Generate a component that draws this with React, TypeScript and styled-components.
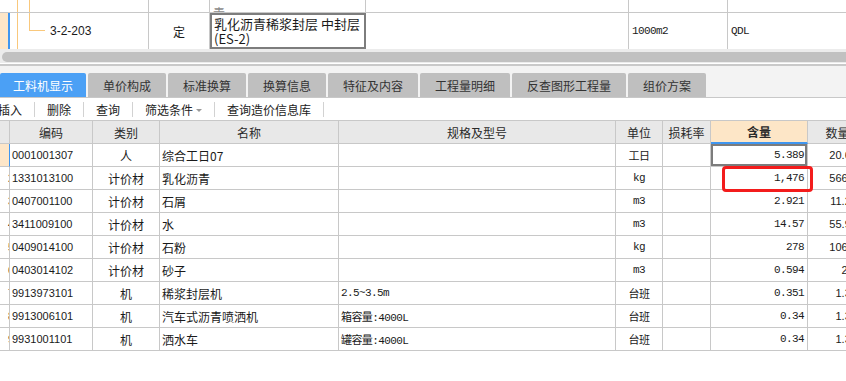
import React from "react";
import styled, { createGlobalStyle, css } from "styled-components";

const LINE = "#c8c8c8";
const ORANGE_BG = "#fde6c8";
const TREE = "#f9c87c";
const BLUE = "#3f96f0";

const GlobalStyle = createGlobalStyle`
  html, body {
    margin: 0;
    padding: 0;
    background: #fff;
    overflow: hidden;
  }
  body {
    font-family: "Noto Sans CJK SC", "Liberation Sans", sans-serif;
    font-size: 12px;
    color: #1a1a1a;
  }
`;

const monoText = css`
  font-family: "Liberation Mono", "Noto Sans CJK SC", monospace;
  font-size: 11px;
  letter-spacing: -0.6px;
`;

const Page = styled.div`
  width: 846px;
  height: 381px;
  overflow: hidden;
  display: flex;
  flex-direction: column;
`;

/* ---------- upper grid (定额行) ---------- */

const TopGrid = styled.div`
  display: grid;
  grid-template-columns: 10px 139px 61px 156px 263px 99px 120px;
  grid-template-rows: 13px 36px;
  width: 848px;
`;

const TopCell = styled.div<{ $row: 1 | 2; $strip?: boolean; $center?: boolean; $editing?: boolean }>`
  display: flex;
  align-items: ${(p) => (p.$row === 1 ? "flex-end" : "center")};
  justify-content: ${(p) => (p.$center ? "center" : "flex-start")};
  overflow: hidden;
  box-sizing: border-box;
  border-right: 1px solid ${LINE};
  border-bottom: ${(p) => (p.$row === 1 ? `1px solid ${LINE}` : "none")};
  ${(p) =>
    p.$strip &&
    css`
      border-right: ${p.$row === 2 ? `2px solid ${BLUE}` : "none"};
      background: ${p.$row === 2 ? ORANGE_BG : "#fff"};
    `}
  ${(p) =>
    p.$editing &&
    css`
      border: 2px solid #7d7d7d;
      align-items: flex-start;
      padding: 1px 2px;
    `}
`;

const TreeCell = styled(TopCell)`
  align-items: stretch;
  padding-left: 7px;
`;

const Guide = styled.span`
  width: 11px;
  flex: none;
  border-left: 1px solid ${TREE};
`;

const Elbow = styled.span`
  width: 15px;
  height: 17px;
  flex: none;
  border-left: 1px solid ${TREE};
  border-bottom: 1px solid ${TREE};
`;

const TreeCode = styled.span`
  align-self: center;
  margin-left: 5px;
  font-family: "Liberation Sans", sans-serif;
  font-size: 12px;
`;

const CutText = styled.span`
  padding-left: 3px;
  margin-bottom: -8px;
  line-height: 14px;
  color: #8a8a8a;
`;

const NameText = styled.div`
  font-size: 13px;
  line-height: 15px;
`;

const MonoText = styled.span`
  ${monoText};
  padding-left: 3px;
`;

/* ---------- scrollbar ---------- */

const Track = styled.div`
  height: 11px;
  padding: 3px 0 1px 2px;
  background: linear-gradient(#ececec, #ececec) top / 100% 14px no-repeat, #fff;
  border-bottom: 2px solid #c9c9c9;
`;

const Thumb = styled.div`
  height: 10px;
  border-radius: 5px 0 0 5px;
  background: #c1c1c1;
`;

/* ---------- tabs ---------- */

const TabBar = styled.div`
  display: flex;
  gap: 2px;
  padding-top: 7px;
  background: #f3f3f3;
  border-bottom: 1px solid ${LINE};
`;

const Tab = styled.div<{ $active?: boolean }>`
  height: 24px;
  padding: 0 15px;
  display: flex;
  align-items: center;
  border-radius: 2px 2px 0 0;
  font-size: 12px;
  color: ${(p) => (p.$active ? "#fff" : "#333")};
  background: ${(p) => (p.$active ? "#4ba0f5" : "#bfbfbf")};
  ${(p) =>
    p.$active &&
    css`
      padding: 0 13px;
    `}
`;

/* ---------- toolbar ---------- */

const Toolbar = styled.div`
  height: 22px;
  display: flex;
  align-items: center;
  margin-left: -14px;
  border-bottom: 1px solid ${LINE};
`;

const ToolItem = styled.span`
  display: flex;
  align-items: center;
  padding: 0 12px;
  font-size: 12px;
  color: #222;
`;

const ToolSep = styled.span`
  width: 1px;
  height: 15px;
  background: #d2d2d2;
`;

const Caret = styled.span`
  margin-left: 3px;
  margin-top: 2px;
  border-left: 3px solid transparent;
  border-right: 3px solid transparent;
  border-top: 3px solid #9a9a9a;
`;

/* ---------- main grid ---------- */

const Grid = styled.div`
  display: grid;
  grid-template-columns: 10px 83px 67px 179px 277px 47px 48px 97px 60px;
  grid-auto-rows: 23px;
  width: 868px;
`;

type Align = "left" | "center" | "right";

const Cell = styled.div<{ $align?: Align; $mono?: boolean; $code?: boolean }>`
  position: relative;
  box-sizing: border-box;
  display: flex;
  align-items: center;
  justify-content: ${(p) =>
    p.$align === "center" ? "center" : p.$align === "right" ? "flex-end" : "flex-start"};
  padding: ${(p) => (p.$align === "right" ? "0 3px 0 0" : p.$align === "center" ? "0" : "0 0 0 2px")};
  border-right: 1px solid ${LINE};
  border-bottom: 1px solid ${LINE};
  white-space: nowrap;
  font-size: 12px;
  ${(p) => p.$mono && monoText};
  ${(p) =>
    p.$code &&
    css`
      font-family: "Liberation Sans", sans-serif;
      font-size: 11px;
    `}
`;

const HeadCell = styled(Cell)<{ $hot?: boolean }>`
  justify-content: center;
  padding: 0;
  background: ${(p) => (p.$hot ? "#fde6c7" : "#e8e8e8")};
  color: #2a2a2a;
  font-weight: ${(p) => (p.$hot ? 700 : 400)};
  ${(p) =>
    p.$hot &&
    css`
      border-bottom: 2px solid ${BLUE};
    `}
`;

const NoCell = styled(Cell)<{ $current?: boolean }>`
  overflow: hidden;
  justify-content: flex-end;
  padding: 0;
  background: ${(p) => (p.$current ? ORANGE_BG : "#fff")};
  border-right-color: ${(p) => (p.$current ? BLUE : LINE)};
  font-family: "Liberation Sans", sans-serif;
  font-size: 11px;
`;

const NoText = styled.span`
  margin-right: -5px;
`;

const QtyCell = styled(Cell)<{ $selected?: boolean }>`
  ${(p) =>
    p.$selected &&
    css`
      box-shadow: inset 0 0 0 2px #7c7c7c;
    `}
`;

const Mark = styled.span`
  position: absolute;
  left: 11px;
  top: -1px;
  width: 91px;
  height: 26px;
  box-sizing: border-box;
  border: 3px solid #f31c1c;
  border-radius: 4px;
  z-index: 2;
`;

const AmountCell = styled(Cell)`
  font-family: "Liberation Sans", sans-serif;
  font-size: 11px;
  padding-right: 4px;
`;

const headers = ["", "编码", "类别", "名称", "规格及型号", "单位", "损耗率", "含量", "数量"];

const rows = [
  { code: "0001001307", type: "人", name: "综合工日07", spec: "", unit: "工日", qty: "5.389", amount: "20.614" },
  { code: "1331013100", type: "计价材", name: "乳化沥青", spec: "", unit: "kg", qty: "1,476", amount: "566.38" },
  { code: "0407001100", type: "计价材", name: "石屑", spec: "", unit: "m3", qty: "2.921", amount: "11.204" },
  { code: "3411009100", type: "计价材", name: "水", spec: "", unit: "m3", qty: "14.57", amount: "55.938" },
  { code: "0409014100", type: "计价材", name: "石粉", spec: "", unit: "kg", qty: "278", amount: "106.73" },
  { code: "0403014102", type: "计价材", name: "砂子", spec: "", unit: "m3", qty: "0.594", amount: "2.28" },
  { code: "9913973101", type: "机", name: "稀浆封层机", spec: "2.5~3.5m", unit: "台班", qty: "0.351", amount: "1.348" },
  { code: "9913006101", type: "机", name: "汽车式沥青喷洒机", spec: "箱容量:4000L", unit: "台班", qty: "0.34", amount: "1.306" },
  { code: "9931001101", type: "机", name: "洒水车", spec: "罐容量:4000L", unit: "台班", qty: "0.34", amount: "1.306" },
];

const tabs = ["工料机显示", "单价构成", "标准换算", "换算信息", "特征及内容", "工程量明细", "反查图形工程量", "组价方案"];

export default function App() {
  return (
    <>
      <GlobalStyle />
      <Page>
        <TopGrid>
          <TopCell $row={1} $strip />
          <TreeCell $row={1}>
            <Guide />
            <Guide />
          </TreeCell>
          <TopCell $row={1} />
          <TopCell $row={1}>
            <CutText>青</CutText>
          </TopCell>
          <TopCell $row={1} />
          <TopCell $row={1} />
          <TopCell $row={1} />

          <TopCell $row={2} $strip />
          <TreeCell $row={2}>
            <Guide />
            <Elbow />
            <TreeCode>3-2-203</TreeCode>
          </TreeCell>
          <TopCell $row={2} $center>
            定
          </TopCell>
          <TopCell $row={2} $editing>
            <NameText>
              乳化沥青稀浆封层 中封层
              <br />
              (ES-2)
            </NameText>
          </TopCell>
          <TopCell $row={2} />
          <TopCell $row={2}>
            <MonoText>1000m2</MonoText>
          </TopCell>
          <TopCell $row={2}>
            <MonoText>QDL</MonoText>
          </TopCell>
        </TopGrid>

        <Track>
          <Thumb />
        </Track>

        <TabBar>
          {tabs.map((t, i) => (
            <Tab key={t} $active={i === 0}>
              {t}
            </Tab>
          ))}
        </TabBar>

        <Toolbar>
          <ToolItem>插入</ToolItem>
          <ToolSep />
          <ToolItem>删除</ToolItem>
          <ToolSep />
          <ToolItem>查询</ToolItem>
          <ToolSep />
          <ToolItem>
            筛选条件
            <Caret />
          </ToolItem>
          <ToolSep />
          <ToolItem>查询造价信息库</ToolItem>
          <ToolSep />
        </Toolbar>

        <Grid>
          {headers.map((h, i) => (
            <HeadCell key={i} $hot={h === "含量"}>
              {h}
            </HeadCell>
          ))}
          {rows.map((r, i) => (
            <React.Fragment key={r.code}>
              <NoCell $current={i === 0}>{i > 0 && <NoText>{i + 1}</NoText>}</NoCell>
              <Cell $code>{r.code}</Cell>
              <Cell $align="center">{r.type}</Cell>
              <Cell>{r.name}</Cell>
              <Cell $mono>{r.spec}</Cell>
              <Cell $align="center" $mono>
                {r.unit}
              </Cell>
              <Cell />
              <QtyCell $align="right" $mono $selected={i === 0}>
                {r.qty}
                {i === 1 && <Mark />}
              </QtyCell>
              <AmountCell $align="right">{r.amount}</AmountCell>
            </React.Fragment>
          ))}
        </Grid>
      </Page>
    </>
  );
}
